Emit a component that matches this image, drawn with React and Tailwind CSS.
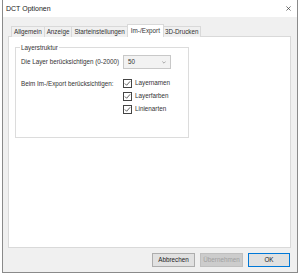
import React from 'react';

const tabs = ['Allgemein', 'Anzeige', 'Starteinstellungen', 'Im-/Export', '3D-Drucken'];

const Check = ({ label }) => (
    <label className="flex items-center gap-[3px] h-[13px]">
        <span className="w-[9px] h-[9px] border border-[#444] bg-white flex items-center justify-center">
            <svg viewBox="0 0 8 8" className="w-[7px] h-[7px]">
                <path d="M1 4 L3 6 L7 1.5" fill="none" stroke="#333" strokeWidth="0.9" />
            </svg>
        </span>
        <span>{label}</span>
    </label>
);

const App = () => {
    return (
        <div className="w-[300px] h-[275px] bg-white font-['Liberation_Sans',sans-serif] text-[6.3px] text-[#333] leading-none">
            <div className="ml-[2px] w-[296px] h-[273px] border-l border-r border-b border-[#8a8a8a] flex flex-col">
                {/* Title bar */}
                <div className="h-[17px] bg-white flex items-center justify-between pl-[3px] pr-[6px] text-[7px] text-[#222]">
                    <span>DCT Optionen</span>
                    <svg viewBox="0 0 6 6" className="w-[5px] h-[5px]">
                        <path d="M0.5 0.5 L5.5 5.5 M5.5 0.5 L0.5 5.5" stroke="#333" strokeWidth="0.8" />
                    </svg>
                </div>

                {/* Body */}
                <div className="flex-1 bg-[#f0f0f0] pt-[7px] pl-[5px] pr-[6px] flex flex-col">
                    {/* Tabs */}
                    <div className="flex items-end h-[13px] pl-[3px] relative z-10">
                        {tabs.map((t) => (
                            t === 'Im-/Export' ? (
                                <div key={t} className="h-[13px] px-[3px] bg-white border border-b-0 border-[#d9d9d9] flex items-center -mx-[1px] relative">
                                    {t}
                                </div>
                            ) : (
                                <div key={t} className="h-[11px] px-[2px] border border-b-0 border-[#d9d9d9] bg-[#f0f0f0] flex items-center -ml-[1px] first:ml-0">
                                    {t}
                                </div>
                            )
                        ))}
                    </div>

                    {/* Panel */}
                    <div className="h-[212px] bg-white border border-[#d9d9d9] -mt-[1px] pt-[10px] pl-[6px]">
                        <div className="w-[174px] h-[91px] border border-[#dcdcdc] relative pt-[5px] pl-[5px]">
                            <span className="absolute -top-[3px] left-[4px] bg-white px-[1px]">Layerstruktur</span>
                            <div className="flex items-center h-[14px] mt-[2px]">
                                <span className="w-[102px]">Die Layer berücksichtigen (0-2000)</span>
                                <div className="w-[48px] h-[14px] border border-[#c8c8c8] bg-[#f2f2f2] flex items-center justify-between pl-[4px] pr-[4px]">
                                    <span>50</span>
                                    <svg viewBox="0 0 6 4" className="w-[4px] h-[3px]">
                                        <path d="M0.5 0.5 L3 3 L5.5 0.5" fill="none" stroke="#666" strokeWidth="0.8" />
                                    </svg>
                                </div>
                            </div>
                            <div className="flex mt-[8px]">
                                <span className="w-[102px] pt-[4px]">Beim Im-/Export berücksichtigen:</span>
                                <div className="flex flex-col">
                                    <Check label="Layernamen" />
                                    <Check label="Layerfarben" />
                                    <Check label="Linienarten" />
                                </div>
                            </div>
                        </div>
                    </div>

                    {/* Buttons */}
                    <div className="flex justify-end gap-[5px] mt-[5px] pr-[1px]">
                        <button className="w-[43px] h-[14px] bg-[#e1e1e1] border border-[#adadad] text-[6.3px] text-[#222]">Abbrechen</button>
                        <button className="w-[43px] h-[14px] bg-[#cccccc] border border-[#bfbfbf] text-[6.3px] text-[#a0a0a0]">Übernehmen</button>
                        <button className="w-[42px] h-[14px] bg-[#e1e1e1] border border-[#0078d7] text-[6.3px] text-[#222]">OK</button>
                    </div>
                </div>
            </div>
        </div>
    );
};

export default App;
